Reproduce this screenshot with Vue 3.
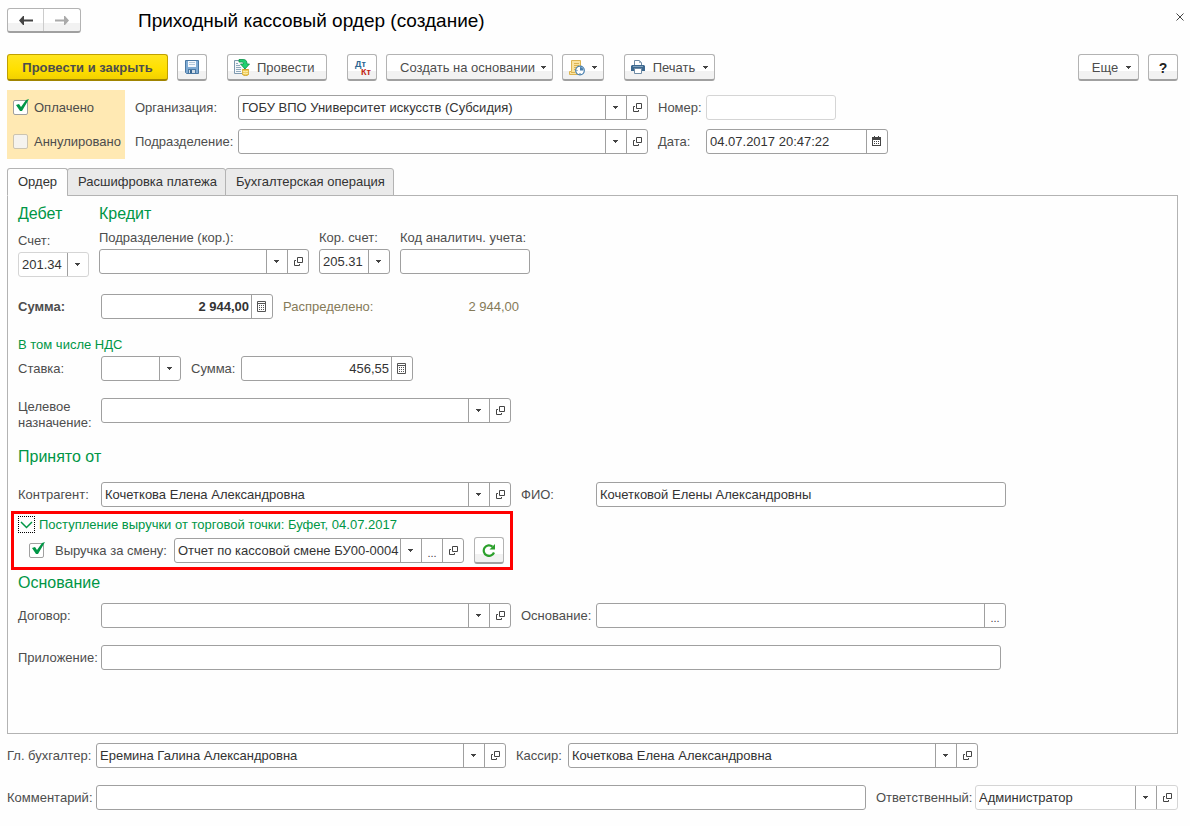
<script setup>
import { ref } from 'vue'

const paid = ref(true)
const cancelled = ref(false)
const shiftRevenue = ref(true)
const tabs = ['Ордер', 'Расшифровка платежа', 'Бухгалтерская операция']
const activeTab = ref(0)
</script>

<template>
  <svg class="sprite" aria-hidden="true">
    <symbol id="arrow" viewBox="0 0 5 3"><path d="M0 0h5v1H4v1H3v1H2V2H1V1H0z" fill="#444" /></symbol>
    <symbol id="open" viewBox="0 0 9 9">
      <path d="M3.5.5h5v5h-5zM2 3.500H.5v5h5V7" fill="none" stroke="#444" />
    </symbol>
    <symbol id="calc" viewBox="0 0 9 11">
      <path d="M.5.5h8v10h-8z" fill="none" stroke="#555" />
      <path d="M1 2h7v1H1zM2 4h1v1H2zM4 4h1v1H4zM6 4h1v1H6zM2 6h1v1H2zM4 6h1v1H4zM6 6h1v1H6zM2 8h1v1H2zM4 8h1v1H4zM6 8h1v1H6z" fill="#555" />
    </symbol>
    <symbol id="calendar" viewBox="0 0 9 11">
      <path d="M0 1h2V0h1v1h3V0h1v1h2v9H0zM1 4v5h7V4z" fill="#444" fill-rule="evenodd" />
      <path d="M2 5h1v1H2zM4 5h1v1H4zM6 5h1v1H6zM2 7h1v1H2zM4 7h1v1H4zM6 7h1v1H6z" fill="#444" />
    </symbol>
    <symbol id="tick" viewBox="0 0 13 12">
      <path d="M0 6 3 5 5 8 10 1 13 0 6 12H4z" fill="#009646" />
    </symbol>
  </svg>

  <main class="page">
    <header class="titlebar">
      <div class="history">
        <button type="button" aria-label="Назад">
          <svg width="14" height="11" viewBox="0 0 14 11"><path d="M14 4.500v2H5V10H4L0 5.500 4 1h1v3.500z" fill="#444" /></svg>
        </button>
        <button type="button" aria-label="Вперед">
          <svg width="14" height="11" viewBox="0 0 14 11"><path d="M0 4.500v2h9V10h1l4-4.500L10 1H9v3.500z" fill="#aaa" /></svg>
        </button>
      </div>
      <h1>Приходный кассовый ордер (создание)</h1>
      <button type="button" class="close" aria-label="Закрыть">
        <svg width="8" height="8" viewBox="0 0 8 8"><path d="M.5.5l7 7m0-7l-7 7" stroke="#444" fill="none" /></svg>
      </button>
    </header>

    <div class="toolbar">
      <button type="button" class="btn primary">Провести и закрыть</button>
      <button type="button" class="btn square" aria-label="Записать">
        <svg width="14" height="15" viewBox="0 0 14 15">
          <path d="M.5.5h13v13h-12l-1-1z" fill="#7fabd4" stroke="#4a78a3" />
          <path d="M3 1h8v6H3z" fill="#f4f8fc" /><path d="M4 2h6v1H4zM4 4h6v1H4z" fill="#b4c8da" />
          <path d="M3 9h8v4H3z" fill="#4a78a3" /><path d="M4 10h6v3H4z" fill="#cfdbe6" /><path d="M5 10h2v3H5z" fill="#35648f" />
        </svg>
      </button>
      <button type="button" class="btn post">
        <svg width="16" height="17" viewBox="0 0 16 17">
          <path d="M.5 1.500h10v13H.5z" fill="#f5f8fa" stroke="#7d98ae" />
          <path d="M2 4h2v1H2zM2 6h4v1H2zM2 8h5v1H2zM2 10h5v1H2zM2 12h5v1H2z" fill="#8fa9bd" />
          <path d="M5 .5h4c3 0 4 1.500 4 4.500h2.500L11 10 6.500 5H9.500c0-1.500-.5-2-2-2H5z" fill="#20d070" stroke="#0c9148" stroke-width=".8" />
          <path d="M8.500 10.500h6v5c-1 1.300-5 1.300-6 0z" fill="#efcb55" stroke="#d0a52b" />
          <path d="M8.500 12c1 1 5 1 6 0M8.500 14c1 1 5 1 6 0" fill="none" stroke="#fff2b5" />
        </svg>
        Провести
      </button>
      <button type="button" class="btn square entries"><span>Дт</span><span>Кт</span></button>
      <button type="button" class="btn create">Создать на основании<svg class="arrow"><use href="#arrow" /></svg></button>
      <button type="button" class="btn reports" aria-label="Отчеты">
        <svg width="16" height="17" viewBox="0 -1 16 17">
          <path d="M2.500.5h9v11H12v3H.5v-3h2z" fill="#fae3a0" stroke="#dcb450" />
          <path d="M5 3h5v1H5zM5 5h5v1H5zM5 7h4v1H5zM5 9h3v1H5zM2 12h4v1H2z" fill="#dcb450" />
          <circle cx="11" cy="10.500" r="4.300" fill="#fff" stroke="#477fae" stroke-width="1.200" />
          <path d="M11 10.500V7a3.500 3.500 0 0 1 3.400 3.500z" fill="#477fae" />
          <path d="M10.500 13h1v1h-1zM7.500 10h1v1h-1z" fill="#477fae" />
        </svg>
        <svg class="arrow"><use href="#arrow" /></svg>
      </button>
      <button type="button" class="btn print">
        <svg width="14" height="15" viewBox="0 0 14 15">
          <path d="M3.500 6V.5h5l2 2V6" fill="#fff" stroke="#6f8ba5" /><path d="M8 0v3h3z" fill="#9bb0c2" />
          <path d="M1 5h12l1 1v5H0V6z" fill="#3c688f" /><path d="M2 6h10v1H2z" fill="#7fa0bb" />
          <path d="M3.500 8.500h7v5h-7z" fill="#fff" stroke="#6f8ba5" />
        </svg>
        Печать<svg class="arrow"><use href="#arrow" /></svg>
      </button>
      <button type="button" class="btn more">Еще<svg class="arrow"><use href="#arrow" /></svg></button>
      <button type="button" class="btn square help">?</button>
    </div>

    <section class="head">
      <div class="status">
        <div class="check">
          <span class="box"><input id="paid" v-model="paid" type="checkbox" /><svg v-if="paid" class="tick"><use href="#tick" /></svg></span>
          <label for="paid">Оплачено</label>
        </div>
        <div class="check">
          <span class="box"><input id="cancelled" v-model="cancelled" type="checkbox" disabled /></span>
          <label for="cancelled">Аннулировано</label>
        </div>
      </div>
      <div class="requisites">
        <label for="org">Организация:</label>
        <div class="field combo">
          <select id="org"><option>ГОБУ ВПО Университет искусств (Субсидия)</option></select>
          <span class="drop"><svg class="arrow"><use href="#arrow" /></svg></span>
          <button type="button" class="opener" aria-label="Открыть"><svg class="open"><use href="#open" /></svg></button>
        </div>
        <label for="number">Номер:</label>
        <div class="field number muted"><input id="number" type="text" /></div>

        <label for="dept">Подразделение:</label>
        <div class="field combo">
          <select id="dept"><option></option></select>
          <span class="drop"><svg class="arrow"><use href="#arrow" /></svg></span>
          <button type="button" class="opener" aria-label="Открыть"><svg class="open"><use href="#open" /></svg></button>
        </div>
        <label for="date">Дата:</label>
        <div class="field date">
          <input id="date" type="text" value="04.07.2017 20:47:22" />
          <button type="button" aria-label="Календарь"><svg class="calendar"><use href="#calendar" /></svg></button>
        </div>
      </div>
    </section>

    <div class="tabs" role="tablist">
      <button v-for="(tab, i) in tabs" :key="tab" type="button" role="tab" :aria-selected="activeTab === i" :class="{ active: activeTab === i }" @click="activeTab = i">{{ tab }}</button>
    </div>

    <section class="panel">
      <div class="accounts">
        <div class="debit">
          <h2>Дебет</h2>
          <label for="account">Счет:</label>
          <div class="field list muted">
            <select id="account"><option>201.34</option></select>
            <span class="drop"><svg class="arrow"><use href="#arrow" /></svg></span>
          </div>
        </div>
        <div class="credit">
          <h2>Кредит</h2>
          <div class="credit-fields">
            <div class="stack">
              <label for="cdept">Подразделение (кор.):</label>
              <div class="field combo medium">
                <select id="cdept"><option></option></select>
                <span class="drop"><svg class="arrow"><use href="#arrow" /></svg></span>
                <button type="button" class="opener" aria-label="Открыть"><svg class="open"><use href="#open" /></svg></button>
              </div>
            </div>
            <div class="stack">
              <label for="caccount">Кор. счет:</label>
              <div class="field list">
                <select id="caccount"><option>205.31</option></select>
                <span class="drop"><svg class="arrow"><use href="#arrow" /></svg></span>
              </div>
            </div>
            <div class="stack">
              <label for="code">Код аналитич. учета:</label>
              <div class="field number"><input id="code" type="text" /></div>
            </div>
          </div>
        </div>
      </div>

      <div class="row total">
        <label for="sum">Сумма:</label>
        <div class="field amount">
          <input id="sum" type="text" value="2 944,00" />
          <button type="button" aria-label="Калькулятор"><svg class="calc"><use href="#calc" /></svg></button>
        </div>
        <span class="spread">Распределено:</span>
        <output class="spread-value">2 944,00</output>
      </div>

      <h3>В том числе НДС</h3>
      <div class="row">
        <label for="rate">Ставка:</label>
        <div class="field list rate">
          <select id="rate"><option></option></select>
          <span class="drop"><svg class="arrow"><use href="#arrow" /></svg></span>
        </div>
        <label for="vat" class="second vat">Сумма:</label>
        <div class="field amount">
          <input id="vat" type="text" value="456,55" />
          <button type="button" aria-label="Калькулятор"><svg class="calc"><use href="#calc" /></svg></button>
        </div>
      </div>

      <div class="row purpose">
        <label for="purpose">Целевое назначение:</label>
        <div class="field combo">
          <select id="purpose"><option></option></select>
          <span class="drop"><svg class="arrow"><use href="#arrow" /></svg></span>
          <button type="button" class="opener" aria-label="Открыть"><svg class="open"><use href="#open" /></svg></button>
        </div>
      </div>

      <h2 class="received">Принято от</h2>
      <div class="row">
        <label for="party">Контрагент:</label>
        <div class="field combo">
          <select id="party"><option>Кочеткова Елена Александровна</option></select>
          <span class="drop"><svg class="arrow"><use href="#arrow" /></svg></span>
          <button type="button" class="opener" aria-label="Открыть"><svg class="open"><use href="#open" /></svg></button>
        </div>
        <label for="fio" class="second">ФИО:</label>
        <div class="field wide"><input id="fio" type="text" value="Кочетковой Елены Александровны" /></div>
      </div>

      <div class="revenue">
        <div class="revenue-title">
          <button type="button" aria-label="Свернуть группу">
            <svg width="13" height="8" viewBox="0 0 13 8"><path d="M1 1l5.500 5.500L12 1" fill="none" stroke="#009646" stroke-width="1.500" /></svg>
          </button>
          <h3>Поступление выручки от торговой точки: Буфет, 04.07.2017</h3>
        </div>
        <div class="revenue-row">
          <div class="check">
            <span class="box"><input id="shift" v-model="shiftRevenue" type="checkbox" /><svg v-if="shiftRevenue" class="tick"><use href="#tick" /></svg></span>
            <label for="shift">Выручка за смену:</label>
          </div>
          <div class="field report">
            <select aria-label="Отчет по кассовой смене"><option>Отчет по кассовой смене БУ00-0004</option></select>
            <span class="drop"><svg class="arrow"><use href="#arrow" /></svg></span>
            <button type="button" aria-label="Выбрать" class="dots">...</button>
            <button type="button" class="opener" aria-label="Открыть"><svg class="open"><use href="#open" /></svg></button>
          </div>
          <button type="button" class="btn square refresh" aria-label="Обновить">
            <svg width="14" height="13" viewBox="0 0 14 13">
              <path d="M12 8.500A5.300 5.300 0 1 1 10.500 2.600" fill="none" stroke="#2ca02c" stroke-width="2.200" />
              <path d="M13 0v5.500H7.500z" fill="#2ca02c" />
            </svg>
          </button>
        </div>
      </div>

      <h2 class="basis">Основание</h2>
      <div class="row">
        <label for="contract">Договор:</label>
        <div class="field combo">
          <select id="contract"><option></option></select>
          <span class="drop"><svg class="arrow"><use href="#arrow" /></svg></span>
          <button type="button" class="opener" aria-label="Открыть"><svg class="open"><use href="#open" /></svg></button>
        </div>
        <label for="basis" class="second">Основание:</label>
        <div class="field wide">
          <input id="basis" type="text" />
          <button type="button" aria-label="Выбрать" class="dots">...</button>
        </div>
      </div>
      <div class="row attachment">
        <label for="attachment">Приложение:</label>
        <div class="field"><input id="attachment" type="text" /></div>
      </div>
    </section>

    <footer>
      <div class="row">
        <label for="chief">Гл. бухгалтер:</label>
        <div class="field combo">
          <select id="chief"><option>Еремина Галина Александровна</option></select>
          <span class="drop"><svg class="arrow"><use href="#arrow" /></svg></span>
          <button type="button" class="opener" aria-label="Открыть"><svg class="open"><use href="#open" /></svg></button>
        </div>
        <label for="cashier" class="second cashier">Кассир:</label>
        <div class="field combo">
          <select id="cashier"><option>Кочеткова Елена Александровна</option></select>
          <span class="drop"><svg class="arrow"><use href="#arrow" /></svg></span>
          <button type="button" class="opener" aria-label="Открыть"><svg class="open"><use href="#open" /></svg></button>
        </div>
      </div>
      <div class="row">
        <label for="comment">Комментарий:</label>
        <div class="field grow"><input id="comment" type="text" /></div>
        <label for="owner" class="second owner">Ответственный:</label>
        <div class="field combo short muted">
          <select id="owner"><option>Администратор</option></select>
          <span class="drop"><svg class="arrow"><use href="#arrow" /></svg></span>
          <button type="button" class="opener" aria-label="Открыть"><svg class="open"><use href="#open" /></svg></button>
        </div>
      </div>
    </footer>
  </main>
</template>

<style>
body {
  background: #fefefe;
}
</style>

<style scoped>
.sprite {
  position: absolute;
  width: 0;
  height: 0;
}
.page,
.page * {
  box-sizing: border-box;
}
.page {
  padding: 8px 12px 16px 7px;
  color: #4d4d4d;
  font: 13px/16px "Liberation Sans", Arial, sans-serif;
}
button,
input,
select {
  margin: 0;
  padding: 0;
  font: inherit;
  color: inherit;
  border: 0;
  background: none;
  border-radius: 0;
}
h1,
h2,
h3 {
  margin: 0;
  font-weight: 400;
}
h2 {
  font-size: 16px;
  line-height: 20px;
  color: #009646;
}
h3 {
  font-size: 13px;
  line-height: 16px;
  color: #009646;
}
label {
  white-space: nowrap;
}
svg {
  display: block;
  flex: none;
}
.arrow {
  width: 5px;
  height: 3px;
}
.open {
  width: 9px;
  height: 9px;
}
.calc,
.calendar {
  width: 9px;
  height: 11px;
}

/* title */
.titlebar {
  display: flex;
  align-items: center;
  height: 25px;
}
.history {
  display: flex;
  width: 74px;
  height: 25px;
  border: 1px solid #b3b3b3;
  border-bottom: 2px solid #a0a0a0;
  border-radius: 3px;
  background: linear-gradient(#fff 62%, #f2f2f2 62%);
}
.history button {
  flex: 1;
  display: flex;
  align-items: center;
  justify-content: center;
  padding-top: 1px;
}
.history button + button {
  padding-right: 1px;
  border-left: 1px solid #ccc;
}
h1 {
  margin-left: 57px;
  font-size: 19px;
  line-height: 24px;
  color: #000;
}
.close {
  align-self: flex-start;
  margin: 4px -7px 0 auto;
  padding: 1px;
}

/* toolbar */
.toolbar {
  display: flex;
  align-items: center;
  margin-top: 21px;
}
.btn {
  display: flex;
  align-items: center;
  justify-content: center;
  height: 27px;
  padding-top: 1px;
  border: 1px solid #b3b3b3;
  border-bottom: 2px solid #a0a0a0;
  border-radius: 3px;
  background: linear-gradient(#fff 65%, #f2f2f2 65%);
  white-space: nowrap;
}
.primary {
  width: 161px;
  border-color: #c0a000;
  border-bottom-color: #a08400;
  background: linear-gradient(#ffe51f, #ffdf00 60%, #f2d100);
  font-weight: 700;
}
.square {
  width: 30px;
  margin-left: 9px;
}
.post {
  justify-content: flex-start;
  width: 100px;
  gap: 7px;
  margin-left: 20px;
  padding-left: 6px;
}
.entries {
  flex-direction: column;
  margin-left: 20px;
  font: 700 9px/8px "Liberation Sans", Arial, sans-serif;
}
.entries span:first-child {
  align-self: flex-start;
  padding-left: 7px;
  color: #2c6591;
}
.entries span:last-child {
  align-self: flex-end;
  padding-right: 5px;
  color: #c22210;
}
.create {
  width: 167px;
  margin-left: 9px;
  padding-left: 7px;
  gap: 6px;
}
.reports {
  width: 42px;
  margin-left: 9px;
  gap: 7px;
}
.print {
  width: 91px;
  margin-left: 20px;
  gap: 8px;
}
.more {
  width: 61px;
  margin-left: auto;
  padding-left: 6px;
  gap: 8px;
}
.help {
  font-weight: 700;
  font-size: 14px;
  color: #222;
}

/* document header */
.head {
  display: flex;
  gap: 10px;
  margin-top: 9px;
}
.status {
  display: flex;
  flex-direction: column;
  justify-content: space-between;
  width: 118px;
  height: 69px;
  padding: 5px 0 5px 6px;
  background: #ffe9b3;
}
.check {
  display: flex;
  align-items: center;
  gap: 6px;
  height: 25px;
}
.box {
  position: relative;
  width: 15px;
  height: 15px;
}
.box input {
  display: block;
  width: 15px;
  height: 15px;
  appearance: none;
  border: 1px solid #a0a0a0;
  border-radius: 2px;
  background: #fff;
}
.box input:disabled {
  border-color: #ccc4b0;
  background: #f5f3ee;
}
.tick {
  position: absolute;
  left: 3px;
  top: -1px;
  width: 13px;
  height: 12px;
  pointer-events: none;
}
.requisites {
  display: grid;
  grid-template-columns: 103px 410px 58px auto;
  align-items: center;
  row-gap: 9px;
  padding: 5px 0;
}
.requisites label:nth-of-type(even) {
  padding-left: 10px;
}

/* fields */
.field {
  display: grid;
  grid-template-columns: minmax(0, 1fr);
  grid-auto-columns: 21px;
  grid-auto-flow: column;
  height: 25px;
  border: 1px solid #a0a0a0;
  border-radius: 3px;
  background: #fff;
  color: #333;
}
.field input,
.field select {
  width: 100%;
  height: 23px;
  padding: 0 3px;
  color: #333;
  appearance: none;
  outline: none;
}
.field select {
  grid-area: 1 / 1 / 2 / 3;
  padding-right: 21px;
}
.drop {
  grid-area: 1 / 2;
  pointer-events: none;
}
.drop,
.field button {
  display: flex;
  align-items: center;
  justify-content: center;
  padding-right: 1px;
  border-left: 1px solid #a0a0a0;
}
.field .opener {
  padding: 0 0 0 1px;
}
.muted {
  border-color: #d5d5d5;
}
.field .dots {
  padding: 4px 0 0;
  font-size: 11px;
  color: #444;
}
.combo {
  width: 410px;
}
.combo.medium {
  width: 210px;
}
.combo.short {
  width: 203px;
}
.list {
  width: 71px;
}
.list.rate {
  width: 80px;
}
.number {
  width: 130px;
}
.date {
  width: 182px;
}
.amount {
  width: 172px;
}
.amount input {
  padding-right: 2px;
  text-align: right;
}
.wide {
  width: 410px;
}
.grow {
  flex: 1;
}
.report {
  width: 290px;
}

/* tabs */
.tabs {
  display: flex;
  margin-top: 9px;
}
.tabs button {
  height: 28px;
  margin: 0 0 -1px -1px;
  padding: 0 8px 0 10px;
  border: 1px solid #b3b3b3;
  border-radius: 3px 3px 0 0;
  background: #eaeaea;
  color: #333;
}
.tabs button:first-child {
  margin-left: 0;
  padding-right: 10px;
}
.tabs .active {
  border-bottom-color: #fefefe;
  background: #fefefe;
}
.panel {
  padding: 8px 10px 63px;
  border: 1px solid #b3b3b3;
}

/* tab content */
.accounts {
  display: flex;
  gap: 10px;
}
.debit label {
  display: block;
  margin: 9px 0 3px;
}
.credit-fields {
  display: flex;
  gap: 10px;
  margin-top: 6px;
}
.stack label {
  display: block;
  margin-bottom: 3px;
}
.row {
  display: flex;
  align-items: center;
}
.row label:first-child {
  width: 83px;
}
.row .second {
  width: 85px;
  padding-left: 10px;
}
.row .vat {
  width: 60px;
}
.total {
  margin-top: 17px;
}
.total label,
.total input {
  font-weight: 700;
}
.spread,
.spread-value {
  color: #857a58;
}
.spread {
  width: 146px;
  padding-left: 10px;
}
.spread-value {
  width: 100px;
  text-align: right;
}
.panel > h3 {
  margin: 18px 0 3px;
}
.purpose {
  align-items: flex-start;
  margin-top: 17px;
}
.purpose label:first-child {
  width: 83px;
  padding: 1px 4px 0 0;
  white-space: normal;
}
.received {
  margin: 16px 0 15px;
}
.revenue {
  width: 502px;
  margin: 4px 0 3px -7px;
  padding: 2px 0 3px 4px;
  border: 3px solid #f00;
}
.revenue-title {
  display: flex;
  align-items: center;
  gap: 4px;
}
.revenue-title button {
  display: flex;
  align-items: center;
  justify-content: center;
  width: 17px;
  height: 17px;
  border: 1px dotted #000;
}
.revenue-row {
  display: flex;
  align-items: center;
  margin-top: 4px;
  padding-left: 11px;
}
.revenue-row .check {
  width: 145px;
  gap: 11px;
}
.revenue-row .refresh {
  margin-left: 10px;
}
.basis {
  margin-bottom: 10px;
}
.attachment {
  margin-top: 17px;
}
.attachment .field {
  width: 900px;
}
footer {
  display: flex;
  flex-direction: column;
  gap: 17px;
  margin-top: 9px;
}
footer .row label:first-child {
  width: 89px;
}
footer .row .cashier {
  width: 62px;
}
footer .row .owner {
  width: 109px;
}
</style>
